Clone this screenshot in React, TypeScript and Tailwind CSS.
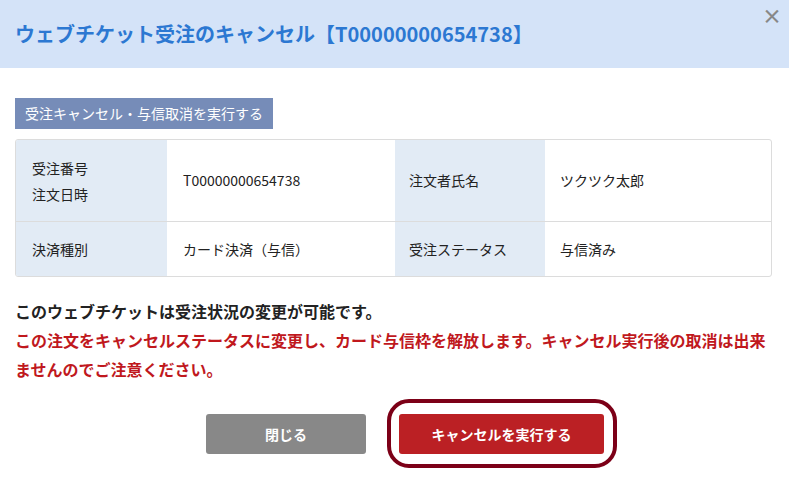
const rows = [
  {
    label1: ["受注番号", "注文日時"],
    value1: "T00000000654738",
    label2: "注文者氏名",
    value2: "ツクツク太郎",
    height: "h-[81px]",
  },
  {
    label1: ["決済種別"],
    value1: "カード決済（与信）",
    label2: "受注ステータス",
    value2: "与信済み",
    height: "h-[55px]",
  },
];

const App = () => {
  return (
    <div
      className="w-[789px] h-[488px] bg-white text-[#222] overflow-hidden"
      style={{ fontFamily: '"Noto Sans CJK JP", "Noto Sans", sans-serif' }}
    >
      <div className="relative h-[68px] bg-[#d4e3f8] flex items-center pl-[15px]">
        <h1 className="text-[20px] font-bold text-[#2c78d2] leading-none">
          ウェブチケット受注のキャンセル【T00000000654738】
        </h1>
        <button className="absolute right-[7px] top-[6px] h-[20px] w-[20px] flex items-center justify-center text-[20px] font-bold text-[#888] leading-[20px]">
          ×
        </button>
      </div>

      <div className="pl-[15px] pr-[17px] pt-[30px]">
        <div className="inline-flex h-[31px] items-center px-[10px] bg-[#768cb8] text-white text-[14px]">
          受注キャンセル・与信取消を実行する
        </div>

        <div className="mt-[10px] border border-[#dcdcdc] rounded-[3px] overflow-hidden text-[14px]">
          {rows.map((row, i) => (
            <div
              key={i}
              className={`flex ${row.height} ${i > 0 ? "border-t border-[#dcdcdc]" : ""}`}
            >
              <div className="w-[151px] bg-[#e2ebf5] pl-[16px] flex flex-col justify-center leading-[26px]">
                {row.label1.map((l) => (
                  <span key={l}>{l}</span>
                ))}
              </div>
              <div className="w-[228px] pl-[16px] flex items-center">{row.value1}</div>
              <div className="w-[150px] bg-[#e2ebf5] pl-[14px] flex items-center">
                {row.label2}
              </div>
              <div className="flex-1 pl-[15px] flex items-center">{row.value2}</div>
            </div>
          ))}
        </div>

        <div className="mt-[20px] text-[16px] font-bold leading-[29px]">
          <p className="text-[#222]">このウェブチケットは受注状況の変更が可能です。</p>
          <p className="text-[#c0181d]">
            この注文をキャンセルステータスに変更し、カード与信枠を解放します。キャンセル実行後の取消は出来ませんのでご注意ください。
          </p>
        </div>

        <div className="mt-[30px] flex justify-center gap-[33px] pl-[23px]">
          <button className="w-[160px] h-[40px] rounded-[3px] bg-[#888888] text-white text-[14px] font-bold">
            閉じる
          </button>
          <div className="relative">
            <button className="w-[205px] h-[40px] rounded-[3px] bg-[#bb2024] text-white text-[14px] font-bold">
              キャンセルを実行する
            </button>
            <span className="absolute -left-[12px] -right-[13px] -top-[15px] -bottom-[14px] border-[4px] border-[#7c0017] rounded-[22px] pointer-events-none" />
          </div>
        </div>
      </div>
    </div>
  );
};

export default App;
